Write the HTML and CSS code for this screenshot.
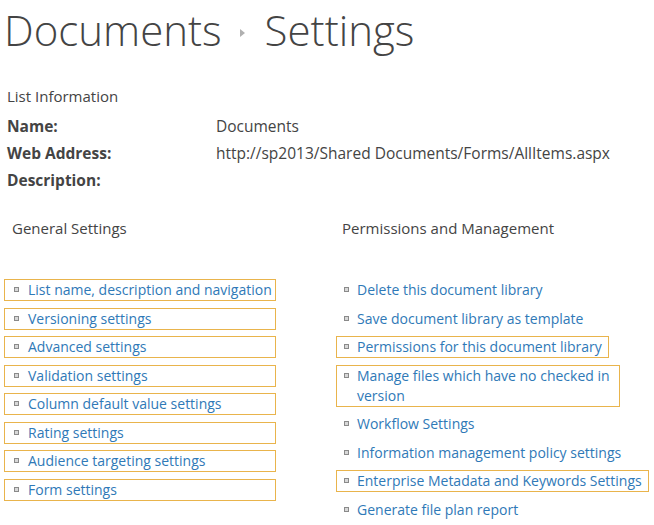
FILE: index.html
```html
<!DOCTYPE html>
<html>
<head>
<meta charset="utf-8">
<link rel="stylesheet" href="styles.css">
</head>
<body>
<div class="page">
  <h1 class="title"><span>Documents</span><span class="sep"></span><span>Settings</span></h1>
  <div class="info">
    <div class="info-head">List Information</div>
    <div class="info-row"><span class="label">Name:</span><span class="value">Documents</span></div>
    <div class="info-row"><span class="label">Web Address:</span><span class="value">http://sp2013/Shared Documents/Forms/AllItems.aspx</span></div>
    <div class="info-row"><span class="label">Description:</span><span class="value"></span></div>
  </div>
  <div class="cols">
    <div class="col col-left">
      <div class="col-head">General Settings</div>
      <ul class="links">
        <li class="item boxed"><span class="bullet"></span><span class="link">List name, description and navigation</span></li>
        <li class="item boxed"><span class="bullet"></span><span class="link">Versioning settings</span></li>
        <li class="item boxed"><span class="bullet"></span><span class="link">Advanced settings</span></li>
        <li class="item boxed"><span class="bullet"></span><span class="link">Validation settings</span></li>
        <li class="item boxed"><span class="bullet"></span><span class="link">Column default value settings</span></li>
        <li class="item boxed"><span class="bullet"></span><span class="link">Rating settings</span></li>
        <li class="item boxed"><span class="bullet"></span><span class="link">Audience targeting settings</span></li>
        <li class="item boxed"><span class="bullet"></span><span class="link">Form settings</span></li>
      </ul>
    </div>
    <div class="col col-right">
      <div class="col-head">Permissions and Management</div>
      <ul class="links">
        <li class="item"><span class="bullet"></span><span class="link">Delete this document library</span></li>
        <li class="item"><span class="bullet"></span><span class="link">Save document library as template</span></li>
        <li class="item boxed"><span class="bullet"></span><span class="link">Permissions for this document library</span></li>
        <li class="item boxed wrap"><span class="bullet"></span><span class="link">Manage files which have no checked in version</span></li>
        <li class="item"><span class="bullet"></span><span class="link">Workflow Settings</span></li>
        <li class="item"><span class="bullet"></span><span class="link">Information management policy settings</span></li>
        <li class="item boxed"><span class="bullet"></span><span class="link">Enterprise Metadata and Keywords Settings</span></li>
        <li class="item"><span class="bullet"></span><span class="link">Generate file plan report</span></li>
      </ul>
    </div>
  </div>
</div>
</body>
</html>
```
FILE: styles.css
```css
html, body {
  margin: 0;
  padding: 0;
  background: #ffffff;
}
body {
  font-family: "Open Sans", "Noto Sans", sans-serif;
  color: #444444;
  font-size: 14px;
}
.page {
  padding: 0 0 0 7px;
}
.title {
  margin: 0;
  padding-top: 0;
  height: 60px;
  font-weight: 300;
  font-size: 42px;
  line-height: 52px;
  color: #444444;
  display: flex;
  align-items: center;
  margin-left: -3px;
}
.sep {
  width: 0;
  height: 0;
  border-left: 5px solid #b0b0b0;
  border-top: 4px solid transparent;
  border-bottom: 4px solid transparent;
  margin: 6px 20px 0 18px;
}
.info {
  margin-top: 24px;
}
.info-head {
  font-size: 15px;
  line-height: 24px;
  margin-bottom: 5px;
}
.info-row {
  display: flex;
  font-size: 15.5px;
  line-height: 27px;
}
.label {
  width: 209px;
  font-weight: 700;
  color: #444;
}
.value {
  color: #444;
}
.cols {
  display: flex;
  margin-top: 22px;
  margin-left: -3px;
}
.col-left {
  width: 332px;
}
.col-right {
  flex: 1;
}
.col-head {
  font-size: 15px;
  padding-left: 8px;
  line-height: 24px;
  height: 63px;
}
.col-right .col-head {
  padding-left: 6px;
}
.links {
  list-style: none;
  margin: 0;
  padding: 0;
  display: flex;
  flex-direction: column;
  gap: 6.5px;
}
.item {
  display: flex;
  align-items: flex-start;
  border: 1px solid transparent;
  padding: 0 6px 0 6px;
  line-height: 20px;
  color: #2f79b7;
}
.col-left .item {
  width: 272px;
  box-sizing: border-box;
  white-space: nowrap;
  padding-left: 8px;
  padding-right: 2px;
}
.col-left .bullet {
  margin-right: 9px;
}
.col-right .item {
  align-self: flex-start;
}
.col-right .item.wrap {
  width: 284px;
  box-sizing: border-box;
}
.boxed {
  border-color: #e9b44c;
}
.bullet {
  flex: none;
  width: 3px;
  height: 3px;
  border: 1px solid #8a8a8a;
  background: #d8d8d8;
  margin: 7px 8px 0 1px;
}
.link {
  color: #2f79b7;
}
```
